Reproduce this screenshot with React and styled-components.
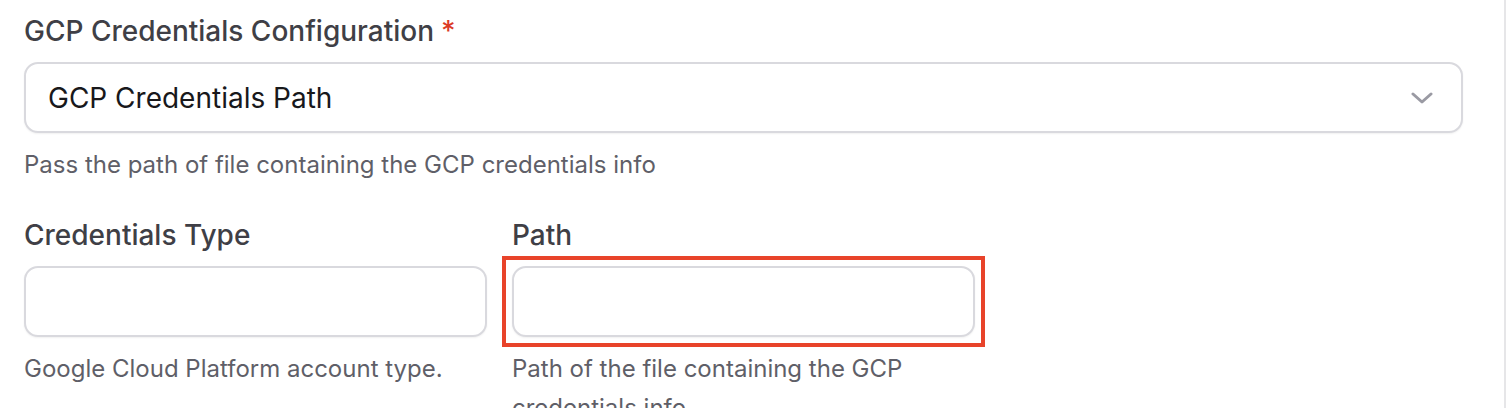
import React from 'react';
import styled, { createGlobalStyle } from 'styled-components';

const GlobalStyle = createGlobalStyle`
  html, body {
    margin: 0;
    padding: 0;
    background: #ffffff;
  }
  body {
    font-family: Inter, "Noto Sans", sans-serif;
    -webkit-font-smoothing: antialiased;
  }
  * {
    box-sizing: border-box;
  }
`;

const Panel = styled.div`
  width: 1506px;
  min-height: 100vh;
  padding: 12px 41px 0 24px;
  border-right: 2px solid #e6e6e8;
  overflow: hidden;
`;

const Field = styled.div`
  display: flex;
  flex-direction: column;
  margin-bottom: ${({ $gap }) => $gap || 0}px;
`;

const Label = styled.label`
  font-size: 28px;
  line-height: 39px;
  font-weight: 500;
  color: #3f3f46;
  margin-bottom: 11px;
`;

const Required = styled.span`
  color: #dc3b26;
  margin-left: 7px;
`;

const SelectBox = styled.div`
  height: 71px;
  display: flex;
  align-items: center;
  justify-content: space-between;
  padding: 0 28px 0 22px;
  border: 2px solid #d9d9de;
  border-radius: 14px;
  background: #fff;
  box-shadow: 0 1px 2px rgba(0, 0, 0, 0.06);
  font-size: 28px;
  color: #18181b;
`;

const InputWrap = styled.div`
  position: relative;

  /* review marker drawn around the field */
  ${({ $highlight }) =>
    $highlight &&
    `
    &::after {
      content: '';
      position: absolute;
      inset: -10px;
      border: 4px solid #e8432a;
      pointer-events: none;
    }
  `}
`;

const TextInput = styled.input`
  display: block;
  width: 100%;
  height: 71px;
  border: 2px solid #d9d9de;
  border-radius: 14px;
  background: #fff;
  box-shadow: 0 1px 2px rgba(0, 0, 0, 0.06);
  font-family: inherit;
  font-size: 28px;
  padding: 0 22px;
  outline: none;
`;

const Help = styled.p`
  margin: 12px 0 0;
  font-size: 24px;
  line-height: 39px;
  color: #5f5f68;
`;

const Grid = styled.div`
  display: grid;
  grid-template-columns: repeat(3, 463px);
  column-gap: 25px;
`;

const Chevron = () => (
  <svg width="22" height="12" viewBox="0 0 22 12" fill="none">
    <path d="M2 2l9 8 9-8" stroke="#9a9aa3" strokeWidth="3" strokeLinecap="round" strokeLinejoin="round" />
  </svg>
);

export default function App() {
  return (
    <>
      <GlobalStyle />
      <Panel>
        <Field $gap={32}>
          <Label>
            GCP Credentials Configuration<Required>*</Required>
          </Label>
          <SelectBox>
            <span>GCP Credentials Path</span>
            <Chevron />
          </SelectBox>
          <Help>Pass the path of file containing the GCP credentials info</Help>
        </Field>
        <Grid>
          <Field>
            <Label>Credentials Type</Label>
            <InputWrap>
              <TextInput />
            </InputWrap>
            <Help>Google Cloud Platform account type.</Help>
          </Field>
          <Field>
            <Label>Path</Label>
            <InputWrap $highlight>
              <TextInput />
            </InputWrap>
            <Help>Path of the file containing the GCP credentials info</Help>
          </Field>
        </Grid>
      </Panel>
    </>
  );
}
